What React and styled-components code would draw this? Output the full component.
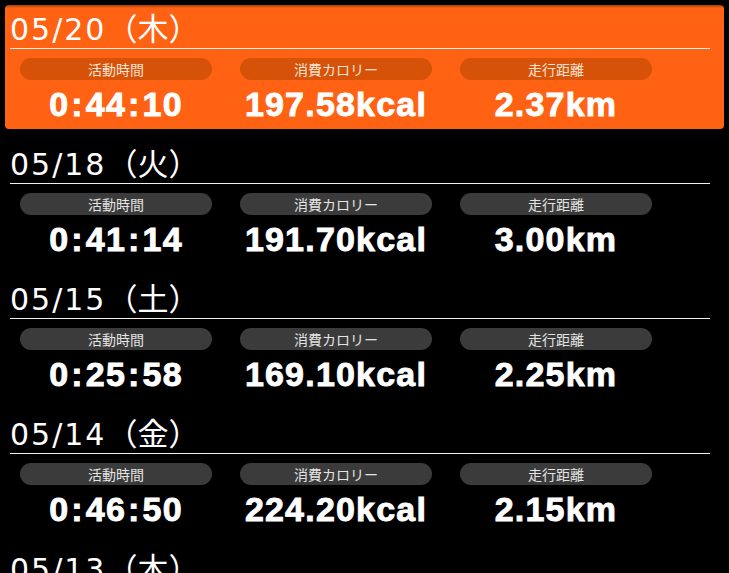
import React from 'react'
import styled, { createGlobalStyle } from 'styled-components'

const GlobalStyle = createGlobalStyle`
  html, body {
    margin: 0;
    padding: 0;
    background: #000;
    height: 100%;
    overflow: hidden;
  }
  body {
    font-family: "Noto Sans CJK JP", "Noto Sans", sans-serif;
    color: #fff;
  }
`

const days = [
  { date: '05/20', wd: '（木）', time: '0:44:10', kcal: '197.58kcal', dist: '2.37km', active: true },
  { date: '05/18', wd: '（火）', time: '0:41:14', kcal: '191.70kcal', dist: '3.00km' },
  { date: '05/15', wd: '（土）', time: '0:25:58', kcal: '169.10kcal', dist: '2.25km' },
  { date: '05/14', wd: '（金）', time: '0:46:50', kcal: '224.20kcal', dist: '2.15km' },
  { date: '05/13', wd: '（木）', time: '0:38:02', kcal: '180.40kcal', dist: '2.05km' },
]

const labels = ['活動時間', '消費カロリー', '走行距離']

// colons in the time get a little more room, like the app's font
const withColons = (s) =>
  s.split(/(:)/).map((part, i) => (part === ':' ? <Colon key={i}>:</Colon> : part))

export default function App() {
  return (
    <>
      <GlobalStyle />
      <List>
        {days.map((d) => (
          <Day key={d.date} $active={d.active}>
            <DateHead>
              {d.date}
              <Weekday>{d.wd}</Weekday>
            </DateHead>
            <Stats>
              {[withColons(d.time), d.kcal, d.dist].map((v, i) => (
                <Stat key={i}>
                  <Pill $active={d.active}>{labels[i]}</Pill>
                  <Value>{v}</Value>
                </Stat>
              ))}
            </Stats>
          </Day>
        ))}
      </List>
      <TopShade />
    </>
  )
}

const List = styled.div`
  display: flex;
  flex-direction: column;
  gap: 11px;
  padding: 5px 5px 0 5px;
`

const Day = styled.div`
  height: 124px;
  box-sizing: border-box;
  padding: 0 14px 0 5px;
  border-radius: 4px;
  background: ${(p) => (p.$active ? '#ff6212' : 'transparent')};
  flex-shrink: 0;
`

const DateHead = styled.div`
  height: 44px;
  line-height: 43px;
  font-family: "DejaVu Sans", "Noto Sans CJK JP", sans-serif;
  font-size: 30px;
  font-weight: 400;
  letter-spacing: 2px;
  border-bottom: 1px solid #f4f0ea;
  white-space: nowrap;
  box-sizing: border-box;
`

const Weekday = styled.span`
  font-family: "Noto Sans CJK JP", sans-serif;
  font-weight: 400;
  font-size: 31px;
  letter-spacing: 0;
`

const Stats = styled.div`
  display: grid;
  grid-template-columns: repeat(3, 192px);
  column-gap: 28px;
  padding: 9px 0 0 10px;
`

const Stat = styled.div`
  display: flex;
  flex-direction: column;
  align-items: center;
`

const Pill = styled.div`
  width: 100%;
  height: 22px;
  line-height: 22px;
  border-radius: 11px;
  text-align: center;
  font-size: 14px;
  color: ${(p) => (p.$active ? '#fbe3d2' : '#e4e4e4')};
  background: ${(p) => (p.$active ? '#d65209' : '#3b3b3b')};
`

const Value = styled.div`
  margin-top: 4px;
  font-family: "Liberation Sans", Arial, sans-serif;
  font-weight: 700;
  font-size: 34px;
  line-height: 40px;
  letter-spacing: 1.2px;
  -webkit-text-stroke: 0.9px #fff;
  white-space: nowrap;
`

const Colon = styled.span`
  padding: 0 2px;
`

const TopShade = styled.div`
  position: fixed;
  top: 0;
  left: 0;
  right: 0;
  height: 8px;
  pointer-events: none;
  background: linear-gradient(to bottom, rgba(0, 0, 0, 1), rgba(0, 0, 0, 0));
`
